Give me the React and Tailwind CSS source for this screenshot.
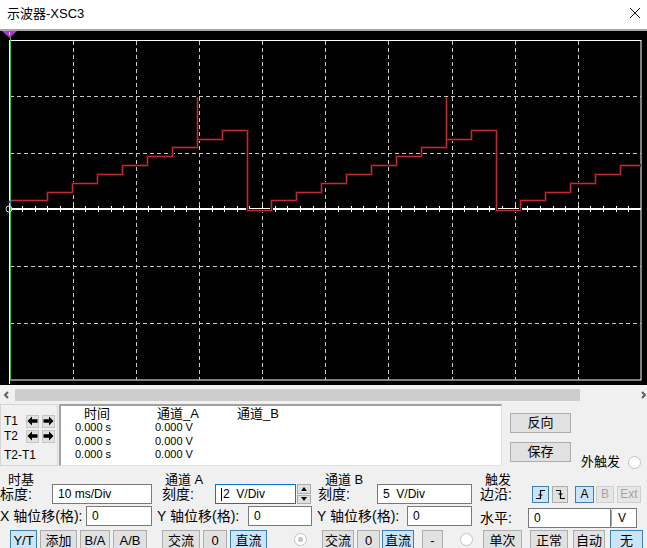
import React from 'react';

const btn = 'h-[22px] shrink-0 flex items-center justify-center border border-[#adadad] bg-[#e1e1e1] text-[13px] text-black';
const btnOn = 'h-[22px] shrink-0 flex items-center justify-center border border-[#3c7fb1] bg-[#cce4f7] text-[13px] text-black';
const small = 'h-[17px] shrink-0 flex items-center justify-center border border-[#adadad] bg-[#e1e1e1] text-[12px]';
const smallOn = 'h-[17px] shrink-0 flex items-center justify-center border border-[#3c7fb1] bg-[#cce4f7] text-[12px]';
const smallOff = 'h-[17px] shrink-0 flex items-center justify-center border border-[#cfcfcf] bg-[#e6e6e6] text-[12px] text-[#a3a3a3]';
const input = 'h-[20px] shrink-0 flex items-center bg-white border border-[#7a7a7a] pl-[5px] text-[12px]';
const label = 'shrink-0 whitespace-nowrap text-[14px]';

// staircase trace, page coordinates, lines on half pixels so they stay 1px
function wavePath() {
  const levels = [200, 192, 183, 174, 165, 156, 147];
  let d = 'M10 200.5';
  for (const s of [22, 271, 520]) {
    for (let i = 0; i < levels.length; i++) {
      const x = s + 25 * i + 0.5;
      if (x > 641) {
        return d + ' H641';
      }
      d += ` H${x} V${levels[i] + 0.5}`;
    }
    d += ` H${s + 175.5} V97.5 V139.5 H${s + 200.5} V130.5 H${s + 225.5} V210.5`;
  }
  return d + ' H641';
}

function Scope() {
  const cols = Array.from({ length: 9 }, (_, i) => Math.round(9.5 + 63.15 * (i + 1)) + 0.5);
  const rows = [96.5, 153.5, 266.5, 323.5];
  const ticks = Array.from({ length: 50 }, (_, i) => Math.round(9.5 + 12.63 * i) + 0.5);
  const d = wavePath();
  return (
    <svg width="647" height="354" viewBox="0 31 647 354" className="block bg-black">
      <rect x="9.5" y="40.5" width="631.5" height="339.5" fill="none" stroke="#ffffff" strokeWidth="1" />
      {cols.map((x) => (
        <line key={x} x1={x} x2={x} y1="41" y2="380" stroke="#c9c9c9" strokeDasharray="4 3" />
      ))}
      {rows.map((y) => (
        <line key={y} x1="10" x2="641" y1={y} y2={y} stroke="#c9c9c9" strokeDasharray="4 3" />
      ))}
      <line x1="9" x2="641" y1="209" y2="209" stroke="#ffffff" strokeWidth="2" />
      {ticks.map((x) => (
        <line key={x} x1={x} x2={x} y1="206" y2="212" stroke="#ffffff" strokeWidth="1" />
      ))}
      <path d={d} fill="none" stroke="#3d0b0d" strokeWidth="3" />
      <path d={d} fill="none" stroke="#c22c35" strokeWidth="1" />
      <line x1="10.5" x2="10.5" y1="36" y2="379" stroke="#3fbf3f" strokeWidth="1" />
      <circle cx="9" cy="209" r="3" fill="none" stroke="#d0d0d0" strokeWidth="1" />
      <circle cx="10" cy="202" r="1.5" fill="#4050ff" />
      <polygon points="2,31 17,31 9.5,38" fill="#a23ec4" />
      <line x1="9.5" x2="9.5" y1="32" y2="35" stroke="#ffffff" strokeWidth="1" />
      <line x1="9.5" x2="9.5" y1="380" y2="384" stroke="#ffffff" strokeWidth="1" />
    </svg>
  );
}

function Radio({ dot }) {
  return (
    <div className="w-[13px] h-[13px] shrink-0 rounded-full border border-[#c2c2c2] bg-white flex items-center justify-center">
      {dot && <div className="w-[5px] h-[5px] rounded-full bg-[#c2c2c2]" />}
    </div>
  );
}

function Arrow({ dir }) {
  return (
    <div className="w-[13px] h-[13px] border border-[#c6c6c6] bg-[#e1e1e1] flex items-center justify-center">
      <svg width="11" height="10" viewBox="0 0 11 10">
        {dir === 'l' ? (
          <path d="M0.5 5 L5 0.5 V3.3 H10.5 V6.7 H5 V9.5 Z" fill="#000" />
        ) : (
          <path d="M10.5 5 L6 0.5 V3.3 H0.5 V6.7 H6 V9.5 Z" fill="#000" />
        )}
      </svg>
    </div>
  );
}

export default function App() {
  return (
    <div className="w-[647px] h-[548px] overflow-hidden bg-[#f0f0f0] text-black font-['Liberation_Sans','Noto_Sans_CJK_SC',sans-serif]">
      {/* title bar */}
      <div className="h-[31px] bg-white border-b-2 border-[#a6a6a6] flex items-center justify-between pl-[7px] pr-[6px]">
        <span className="text-[13px] -mt-[2px]">示波器-XSC3</span>
        <svg width="12" height="12" viewBox="0 0 12 12" className="-mt-[4px]">
          <path d="M1 1 L11 11 M11 1 L1 11" stroke="#111" strokeWidth="1" />
        </svg>
      </div>

      <Scope />

      <div className="flex flex-col h-[163px]">
        {/* scroll bar */}
        <div className="mt-[4px] h-[12px] flex items-center">
          <svg width="15" height="12" viewBox="0 0 15 12" className="shrink-0">
            <path d="M8 3 L5 6 L8 9" fill="none" stroke="#606060" strokeWidth="2" />
          </svg>
          <div className="w-[565px] h-[12px] bg-[#cdcdcd]" />
          <div className="flex-1" />
          <svg width="8" height="12" viewBox="0 0 8 12" className="shrink-0">
            <path d="M3 3 L6 6 L3 9" fill="none" stroke="#606060" strokeWidth="2" />
          </svg>
        </div>

        {/* cursors and readout */}
        <div className="mt-[3px] h-[62px] flex">
          <div className="w-[58px] h-[62px] border border-[#d6d6d6] flex flex-col text-[12px] pl-[3px]">
            <div className="flex items-center mt-[9px] h-[14px]">
              <span className="w-[22px]">T1</span>
              <Arrow dir="l" />
              <div className="w-[3px]" />
              <Arrow dir="r" />
            </div>
            <div className="flex items-center mt-[1px] h-[14px]">
              <span className="w-[22px]">T2</span>
              <Arrow dir="l" />
              <div className="w-[3px]" />
              <Arrow dir="r" />
            </div>
            <div className="mt-[5px] leading-[14px]">T2-T1</div>
          </div>

          <div className="ml-[1px] w-[443px] h-[62px] bg-white border-t-2 border-l-2 border-[#a0a0a0] border-r border-b border-r-[#e2e2e2] border-b-[#e2e2e2] pl-[14px] pt-[1px]">
            <div className="flex text-[13px] leading-[14px]">
              <span className="w-[80px] pl-[9px]">时间</span>
              <span className="w-[82px] pl-[2px]">通道_A</span>
              <span>通道_B</span>
            </div>
            {[0, 1, 2].map((i) => (
              <div key={i} className="flex text-[11px] leading-[13.5px]">
                <span className="w-[80px]">0.000 s</span>
                <span>0.000 V</span>
              </div>
            ))}
          </div>

          <div className="ml-[8px] w-[61px] flex flex-col pt-[9px]">
            <div className="h-[20px] border border-[#adadad] bg-[#e1e1e1] flex items-center justify-center text-[13px]">反向</div>
            <div className="mt-[9px] h-[20px] border border-[#adadad] bg-[#e1e1e1] flex items-center justify-center text-[13px]">保存</div>
          </div>

          <div className="ml-[10px] self-end -mb-[4px] h-[16px] flex items-center text-[13px]">
            <span>外触发</span>
            <div className="ml-[8px]">
              <Radio />
            </div>
          </div>
        </div>

        {/* control groups */}
        <div className="mt-[5px] flex">
          {/* 时基 */}
          <div className="w-[156px] shrink-0 flex flex-col">
            <div className="h-[13px] pl-[8px] text-[13px] leading-[18px]">时基</div>
            <div className="h-[20px] flex items-center">
              <span className={`${label} w-[52px]`}>标度:</span>
              <div className={`${input} w-[100px]`}>10 ms/Div</div>
            </div>
            <div className="mt-[2px] h-[20px] flex items-center">
              <span className={`${label} w-[86px] text-[13.5px]`}>X 轴位移(格):</span>
              <div className={`${input} w-[66px]`}>0</div>
            </div>
            <div className="mt-[4px] flex pl-[10px] gap-[3px]">
              <div className={`${btnOn} w-[27px] text-[12px]`}>Y/T</div>
              <div className={`${btn} w-[37px]`}>添加</div>
              <div className={`${btn} w-[30px] text-[12px]`}>B/A</div>
              <div className={`${btn} w-[34px] text-[12px]`}>A/B</div>
            </div>
          </div>

          {/* 通道 A */}
          <div className="w-[160px] shrink-0 flex flex-col">
            <div className="h-[13px] pl-[9px] text-[13px] leading-[18px]">通道 A</div>
            <div className="h-[20px] flex items-center pl-[6px]">
              <span className={`${label} w-[53px]`}>刻度:</span>
              <div className={`${input} w-[81px] border-[#0078d7]`}>
                <span className="w-px h-[13px] bg-black mr-[1px]" />2&nbsp; V/Div
              </div>
              <div className="ml-[1px] w-[14px] h-[20px] flex flex-col gap-[1px]">
                <div className="h-[9.5px] border border-[#adadad] bg-[#e1e1e1] flex items-center justify-center">
                  <svg width="6" height="4" viewBox="0 0 6 4"><path d="M0 4 L3 0 L6 4 Z" fill="#000" /></svg>
                </div>
                <div className="h-[9.5px] border border-[#adadad] bg-[#e1e1e1] flex items-center justify-center">
                  <svg width="6" height="4" viewBox="0 0 6 4"><path d="M0 0 L3 4 L6 0 Z" fill="#000" /></svg>
                </div>
              </div>
            </div>
            <div className="mt-[2px] h-[20px] flex items-center pl-[1px]">
              <span className={`${label} w-[91px] text-[13.5px]`}>Y 轴位移(格):</span>
              <div className={`${input} w-[64px]`}>0</div>
            </div>
            <div className="mt-[4px] flex items-start pl-[6px]">
              <div className={`${btn} w-[38px]`}>交流</div>
              <div className={`${btn} ml-[3px] w-[24px] text-[12px]`}>0</div>
              <div className={`${btnOn} ml-[3px] w-[37px]`}>直流</div>
              <div className="ml-[27px] mt-[3px]">
                <Radio dot />
              </div>
            </div>
          </div>

          {/* 通道 B */}
          <div className="w-[160px] shrink-0 flex flex-col">
            <div className="h-[13px] pl-[9px] text-[13px] leading-[18px]">通道 B</div>
            <div className="h-[20px] flex items-center pl-[2px]">
              <span className={`${label} w-[59px]`}>刻度:</span>
              <div className={`${input} w-[95px]`}>5&nbsp; V/Div</div>
            </div>
            <div className="mt-[2px] h-[20px] flex items-center pl-[1px]">
              <span className={`${label} w-[90px] text-[13.5px]`}>Y 轴位移(格):</span>
              <div className={`${input} w-[65px]`}>0</div>
            </div>
            <div className="mt-[4px] flex items-start pl-[6px]">
              <div className={`${btn} w-[32px]`}>交流</div>
              <div className={`${btn} ml-[3px] w-[23px] text-[12px]`}>0</div>
              <div className={`${btnOn} ml-[2px] w-[32px]`}>直流</div>
              <div className={`${btn} ml-[8px] w-[21px] text-[12px]`}>-</div>
              <div className="ml-[17px] mt-[3px]">
                <Radio />
              </div>
            </div>
          </div>

          {/* 触发 */}
          <div className="flex-1 flex flex-col">
            <div className="h-[13px] pl-[9px] text-[13px] leading-[18px]">触发</div>
            <div className="h-[20px] flex items-center pl-[4px]">
              <span className={`${label} w-[52px]`}>边沿:</span>
              <div className={`${smallOn} w-[17px]`}>
                <svg width="11" height="11" viewBox="0 0 11 11">
                  <path d="M1 9.5 H5.5 V1.5 H10 M3.5 6 H7.5" fill="none" stroke="#000" strokeWidth="1.2" />
                </svg>
              </div>
              <div className={`${small} ml-[3px] w-[16px]`}>
                <svg width="11" height="11" viewBox="0 0 11 11">
                  <path d="M1 1.5 H5.5 V9.5 H10 M3.5 5 H7.5" fill="none" stroke="#000" strokeWidth="1.2" />
                </svg>
              </div>
              <div className={`${smallOn} ml-[7px] w-[19px]`}>A</div>
              <div className={`${smallOff} ml-[2px] w-[18px]`}>B</div>
              <div className={`${smallOff} ml-[3px] w-[24px]`}>Ext</div>
            </div>
            <div className="mt-[4px] h-[20px] flex items-center pl-[4px]">
              <span className={`${label} w-[48px]`}>水平:</span>
              <div className={`${input} w-[83px]`}>0</div>
              <div className="w-[26px] h-[20px] bg-white border border-l-0 border-[#7a7a7a] flex items-center pl-[7px] text-[12px]">
                <span className="w-px h-[16px] bg-[#a0a0a0] -ml-[7px] mr-[6px]" />V
              </div>
            </div>
            <div className="mt-[2px] flex items-start pl-[7px]">
              <div className={`${btn} w-[39px]`}>单次</div>
              <div className={`${btn} ml-[8px] w-[38px]`}>正常</div>
              <div className={`${btn} ml-[5px] w-[32px]`}>自动</div>
              <div className={`${btnOn} ml-[5px] w-[33px]`}>无</div>
            </div>
          </div>
        </div>
      </div>
    </div>
  );
}
